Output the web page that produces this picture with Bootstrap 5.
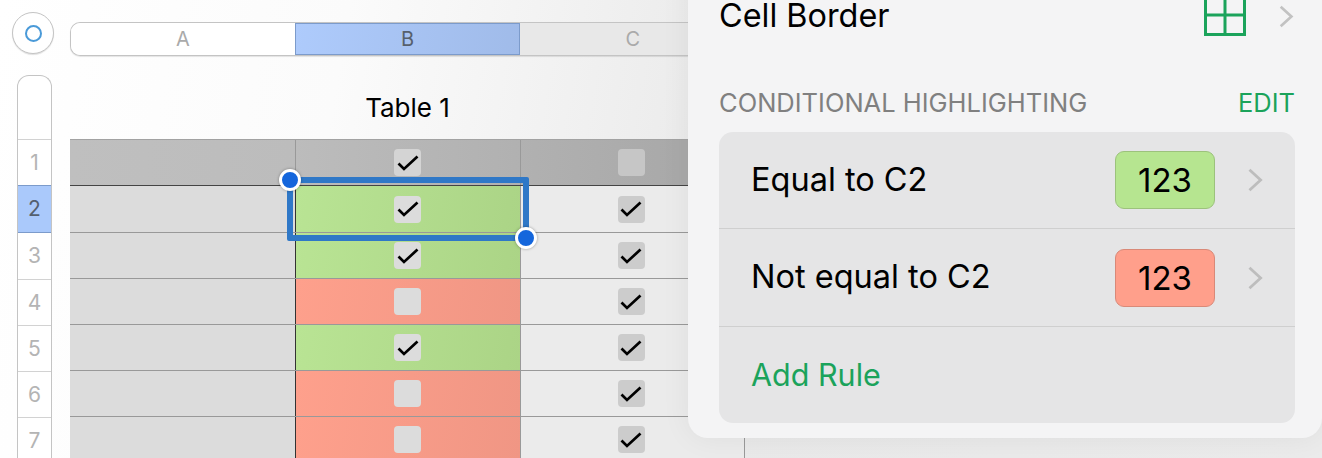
<!doctype html>
<html lang="en">
<head>
  <meta charset="utf-8">
  <meta name="viewport" content="width=device-width, initial-scale=1">
  <title>Table 1</title>
  <link href="https://cdn.jsdelivr.net/npm/bootstrap@5.3.0/dist/css/bootstrap.min.css" rel="stylesheet">
  <style>
    html, body { height: 458px; }
    body {
      font-family: Inter, "Liberation Sans", sans-serif;
      background: linear-gradient(100deg, #fff 0%, #fbfbfb 25%, #e9e9e9 55%, #ebebeb 100%);
      color: #000;
    }
    .sheet-wrap { width: 1322px; height: 458px; }

    /* left rail */
    .rail { width: 70px; padding: 12px 0 0 12px; }
    .sel-all {
      width: 42px; height: 42px; border-radius: 50%;
      background: #fff; border: 1px solid #c4c4c4;
      box-shadow: 0 1px 1px rgba(0,0,0,.12);
    }
    .sel-all span { width: 17px; height: 17px; border-radius: 50%; border: 2.5px solid #4a9ad8; }
    .row-heads {
      width: 35px; margin: 21px 0 0 5px;
      border: 1px solid #c4c4c4; border-bottom: 0; border-radius: 12px 12px 0 0;
      background: #fff; overflow: hidden;
    }
    .row-corner { height: 63px; }
    .row-num {
      height: 46px; border-top: 1px solid #d2d2d2;
      font-size: 21px; color: #b4b4b4;
    }
    .row-num.on { background: #aac9fb; color: #55606e; border-top: 1px solid #7c9bcb; border-bottom: 1px solid #7c9bcb; margin: 0 -1px; height: 48px; }
    .row-num.on + .row-num { border-top: 0; }

    /* columns header */
    .sheet-main { width: 675px; }
    .col-heads {
      margin-top: 22px; height: 34px; width: 675px;
      border: 1px solid #c4c4c4; border-right: 0; border-radius: 10px 0 0 10px;
      box-shadow: 0 1px 1px rgba(0,0,0,.1);
      font-size: 20px; color: #aaa; background: #f0f0f0;
      overflow: hidden;
    }
    .col-heads > div { height: 100%; }
    .col-a { width: 224px; background: #fff; }
    .col-b { width: 226px; background: linear-gradient(100deg, #aecbfc, #a0bbe9); color: #56606c; box-shadow: inset 0 0 0 1px #7c9bcb; }
    .col-c { width: 225px; background: #e8e8e8; }

    .sheet-title { height: 83px; padding-top: 35px; font-size: 26px; line-height: 34px; text-align: center; }

    /* cells */
    .grid-row { height: 46px; border-bottom: 1px solid #999; width: 675px; }
    .grid-row.head { border-top: 1px solid #a2a2a2; height: 47px; border-bottom-color: #444; background: linear-gradient(90deg, #bfbfbf 0%, #bcbcbc 33%, #a9a9a9 90%); }
    .grid-row.second { height: 47px; }
    .cell { height: 100%; }
    .cell-a { width: 225px; background: #dcdcdc; }
    .cell-b { width: 225px; border-left: 1px solid #333; padding-right: 1px; }
    .cell-c { width: 225px; border-left: 1px solid #999; border-right: 1px solid #999; background: #ebebeb; padding-right: 3px; }
    .head .cell-a { background: transparent; }
    .head .cell-c { background: transparent; }
    .head .cell-b, .head .cell-c { border-left-color: #999; }
    .cell-green { background: linear-gradient(100deg, #b9e494, #abd486); }
    .cell-red { background: linear-gradient(100deg, #fea08c, #f09684); }
    .tick {
      width: 27px; height: 27px; border-radius: 4px; background: #dcdcdc;
    }
    .cell-c .tick { background: #cccccc; }
    .head .tick { background: #d4d4d4; }
    .head .cell-c .tick { background: #c6c6c6; }
    .tick svg { width: 22px; height: 16px; }

    /* selection */
    .sel-box {
      position: absolute; left: 287px; top: 177px; width: 242px; height: 64px;
      border: 6px solid #2f78c7; border-radius: 2px;
    }
    .sel-knob {
      position: absolute; width: 22px; height: 22px; border-radius: 50%;
      background: #1466dc; border: 3px solid #fff;
      box-shadow: 0 0 3px rgba(0,0,0,.35);
    }
    .knob-tl { left: 279px; top: 169px; }
    .knob-br { left: 515px; top: 227px; }

    /* inspector popover */
    .inspector {
      position: absolute; left: 688px; top: -40px; width: 634px; height: 478px;
      background: #f4f4f5; border-radius: 0 0 20px 20px;
      box-shadow: 0 0 30px rgba(0,0,0,.06);
      padding: 0 27px 0 31px;
    }
    .border-row { height: 112px; font-size: 32.4px; }
    .border-row svg.grid-ico { width: 42px; height: 42px; margin: 0 32px 2px 0; }
    .border-row .chev { height: 25px; }
    .chev { width: 17px; height: 26px; }
    .section-head { height: 60px; padding-bottom: 14px; font-size: 25.5px; line-height: 30px; }
    .section-head .title-txt { color: #808080; }
    .accent { color: #1ba35b; }
    .rule-group { background: #e5e5e6; border-radius: 14px; height: 291px; }
    .rule-line { height: 97px; padding: 0 31px 0 32px; font-size: 32.5px; border-bottom: 1px solid #cfcfcf; }
    .rule-line.mid { height: 98px; }
    .rule-line:last-child { border-bottom: 0; height: 96px; font-size: 30.5px; }
    .swatch {
      width: 100px; height: 58px; border-radius: 9px; margin-right: 32px;
      font-size: 33px; text-align: center; line-height: 56px;
    }
    .swatch-green { background: #b6e590; border: 1px solid #9cc27c; }
    .swatch-red { background: #ff9f8b; border: 1px solid #d98978; }
  </style>
</head>
<body class="position-relative overflow-hidden">
  <div class="sheet-wrap d-flex overflow-hidden">
    <div class="rail flex-shrink-0">
      <div class="sel-all d-flex align-items-center justify-content-center"><span></span></div>
      <div class="row-heads">
        <div class="row-corner"></div>
        <div class="row-num d-flex align-items-center justify-content-center">1</div>
        <div class="row-num on d-flex align-items-center justify-content-center">2</div>
        <div class="row-num d-flex align-items-center justify-content-center">3</div>
        <div class="row-num d-flex align-items-center justify-content-center">4</div>
        <div class="row-num d-flex align-items-center justify-content-center">5</div>
        <div class="row-num d-flex align-items-center justify-content-center">6</div>
        <div class="row-num d-flex align-items-center justify-content-center">7</div>
      </div>
    </div>
    <div class="sheet-main flex-shrink-0">
      <div class="col-heads d-flex">
        <div class="col-a d-flex align-items-center justify-content-center">A</div>
        <div class="col-b d-flex align-items-center justify-content-center">B</div>
        <div class="col-c d-flex align-items-center justify-content-center">C</div>
      </div>
      <div class="sheet-title">Table 1</div>

      <div class="grid-row head d-flex">
        <div class="cell cell-a"></div>
        <div class="cell cell-b d-flex align-items-center justify-content-center"><div class="tick d-flex align-items-center justify-content-center"><svg viewBox="0 0 22 16"><path d="M1.5 8.5l5.5 5.5L20.5 1.5" fill="none" stroke="#000" stroke-width="2.7"/></svg></div></div>
        <div class="cell cell-c d-flex align-items-center justify-content-center"><div class="tick"></div></div>
      </div>
      <div class="grid-row second d-flex">
        <div class="cell cell-a"></div>
        <div class="cell cell-b cell-green d-flex align-items-center justify-content-center"><div class="tick d-flex align-items-center justify-content-center"><svg viewBox="0 0 22 16"><path d="M1.5 8.5l5.5 5.5L20.5 1.5" fill="none" stroke="#000" stroke-width="2.7"/></svg></div></div>
        <div class="cell cell-c d-flex align-items-center justify-content-center"><div class="tick d-flex align-items-center justify-content-center"><svg viewBox="0 0 22 16"><path d="M1.5 8.5l5.5 5.5L20.5 1.5" fill="none" stroke="#000" stroke-width="2.7"/></svg></div></div>
      </div>
      <div class="grid-row d-flex">
        <div class="cell cell-a"></div>
        <div class="cell cell-b cell-green d-flex align-items-center justify-content-center"><div class="tick d-flex align-items-center justify-content-center"><svg viewBox="0 0 22 16"><path d="M1.5 8.5l5.5 5.5L20.5 1.5" fill="none" stroke="#000" stroke-width="2.7"/></svg></div></div>
        <div class="cell cell-c d-flex align-items-center justify-content-center"><div class="tick d-flex align-items-center justify-content-center"><svg viewBox="0 0 22 16"><path d="M1.5 8.5l5.5 5.5L20.5 1.5" fill="none" stroke="#000" stroke-width="2.7"/></svg></div></div>
      </div>
      <div class="grid-row d-flex">
        <div class="cell cell-a"></div>
        <div class="cell cell-b cell-red d-flex align-items-center justify-content-center"><div class="tick"></div></div>
        <div class="cell cell-c d-flex align-items-center justify-content-center"><div class="tick d-flex align-items-center justify-content-center"><svg viewBox="0 0 22 16"><path d="M1.5 8.5l5.5 5.5L20.5 1.5" fill="none" stroke="#000" stroke-width="2.7"/></svg></div></div>
      </div>
      <div class="grid-row d-flex">
        <div class="cell cell-a"></div>
        <div class="cell cell-b cell-green d-flex align-items-center justify-content-center"><div class="tick d-flex align-items-center justify-content-center"><svg viewBox="0 0 22 16"><path d="M1.5 8.5l5.5 5.5L20.5 1.5" fill="none" stroke="#000" stroke-width="2.7"/></svg></div></div>
        <div class="cell cell-c d-flex align-items-center justify-content-center"><div class="tick d-flex align-items-center justify-content-center"><svg viewBox="0 0 22 16"><path d="M1.5 8.5l5.5 5.5L20.5 1.5" fill="none" stroke="#000" stroke-width="2.7"/></svg></div></div>
      </div>
      <div class="grid-row d-flex">
        <div class="cell cell-a"></div>
        <div class="cell cell-b cell-red d-flex align-items-center justify-content-center"><div class="tick"></div></div>
        <div class="cell cell-c d-flex align-items-center justify-content-center"><div class="tick d-flex align-items-center justify-content-center"><svg viewBox="0 0 22 16"><path d="M1.5 8.5l5.5 5.5L20.5 1.5" fill="none" stroke="#000" stroke-width="2.7"/></svg></div></div>
      </div>
      <div class="grid-row d-flex">
        <div class="cell cell-a"></div>
        <div class="cell cell-b cell-red d-flex align-items-center justify-content-center"><div class="tick"></div></div>
        <div class="cell cell-c d-flex align-items-center justify-content-center"><div class="tick d-flex align-items-center justify-content-center"><svg viewBox="0 0 22 16"><path d="M1.5 8.5l5.5 5.5L20.5 1.5" fill="none" stroke="#000" stroke-width="2.7"/></svg></div></div>
      </div>
    </div>
  </div>

  <div class="sel-box"></div>
  <div class="sel-knob knob-tl"></div>
  <div class="sel-knob knob-br"></div>

  <div class="inspector">
    <div class="border-row d-flex align-items-center">
      <span class="flex-grow-1">Cell Border</span>
      <svg class="grid-ico" viewBox="0 0 42 42"><path d="M1.5 1.5h39v39h-39zM21 1.5v39M1.5 21h39" fill="none" stroke="#1ba35b" stroke-width="3"/></svg>
      <svg class="chev" viewBox="0 0 17 28"><path d="M2 3l12 11L2 25" fill="none" stroke="#c2c2c2" stroke-width="3"/></svg>
    </div>
    <div class="section-head d-flex justify-content-between align-items-end">
      <span class="title-txt">CONDITIONAL HIGHLIGHTING</span>
      <span class="accent">EDIT</span>
    </div>
    <div class="rule-group">
      <div class="rule-line d-flex align-items-center">
        <span class="flex-grow-1">Equal to C2</span>
        <div class="swatch swatch-green">123</div>
        <svg class="chev" viewBox="0 0 17 28"><path d="M2 3l12 11L2 25" fill="none" stroke="#bdbdbd" stroke-width="3"/></svg>
      </div>
      <div class="rule-line mid d-flex align-items-center">
        <span class="flex-grow-1">Not equal to C2</span>
        <div class="swatch swatch-red">123</div>
        <svg class="chev" viewBox="0 0 17 28"><path d="M2 3l12 11L2 25" fill="none" stroke="#bdbdbd" stroke-width="3"/></svg>
      </div>
      <div class="rule-line d-flex align-items-center accent">Add Rule</div>
    </div>
  </div>

  <script src="https://cdn.jsdelivr.net/npm/bootstrap@5.3.0/dist/js/bootstrap.bundle.min.js"></script>
</body>
</html>
